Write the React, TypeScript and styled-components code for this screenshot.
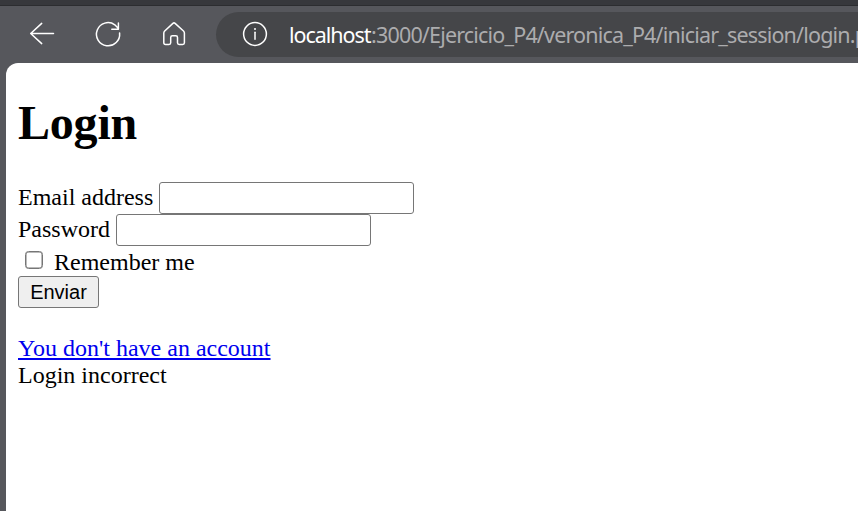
import React from "react";
import styled, { createGlobalStyle } from "styled-components";

const GlobalStyle = createGlobalStyle`
  * { box-sizing: border-box; }
  html, body { margin: 0; padding: 0; }
  body { overflow: hidden; background: #56575c; }
`;

const Browser = styled.div`
  display: flex;
  flex-direction: column;
  width: 858px;
  height: 511px;
  overflow: hidden;
  background: #56575c;
`;

const TabStrip = styled.div`
  flex: none;
  height: 6px;
  background: #37383c;
  border-bottom: 1px solid #2c2d30;
`;

const Toolbar = styled.div`
  flex: none;
  display: flex;
  align-items: center;
  height: 57px;
  padding: 0 0 1px 28px;
`;

const NavButton = styled.button`
  flex: none;
  display: flex;
  align-items: center;
  justify-content: center;
  width: 28px;
  height: 28px;
  margin-right: 38px;
  padding: 0;
  border: 0;
  background: none;
  color: #fff;

  &:last-of-type { margin-right: 28px; }
`;

const Icon = styled.svg`
  display: block;
  width: 28px;
  height: 28px;
  fill: none;
  stroke: currentColor;
  stroke-width: 1.5;
  stroke-linecap: round;
  stroke-linejoin: round;
`;

const AddressBar = styled.div`
  flex: 1;
  display: flex;
  align-items: center;
  gap: 20px;
  height: 45px;
  padding-left: 25px;
  border-radius: 23px 0 0 23px;
  background: #454649;
  color: #fff;
  overflow: hidden;
`;

const InfoIcon = styled(Icon)`
  flex: none;
`;

const Address = styled.div`
  flex: none;
  display: flex;
  padding-top: 1px;
  font: 21.5px/28px "Noto Sans", "Open Sans", sans-serif;
  white-space: nowrap;
`;

const Host = styled.span`
  width: 82px;
  letter-spacing: -1.05px;
  color: #fff;
`;

const Path = styled.span`
  letter-spacing: -0.82px;
  color: #acacae;
`;

const Page = styled.main`
  flex: 1;
  margin-left: 6px;
  padding: 32px 12px 0;
  border-top-left-radius: 12px;
  background: #fff;
  color: #000;
  font: 24px/27px "Liberation Serif", "Times New Roman", serif;
`;

const Title = styled.h1`
  height: 55px;
  margin: 0 0 32px;
  font-size: 48px;
  line-height: 55px;
  letter-spacing: -0.2px;
`;

const Field = styled.div`
  display: flex;
  align-items: center;
  gap: 6px;
  height: 32px;
`;

const Label = styled.label`
  padding-bottom: 1px;
`;

const TextInput = styled.input`
  width: 255px;
  height: 32px;
  margin: 0;
  padding: 2px 3px;
  border: 1px solid #767676;
  border-radius: 3px;
  outline: 0;
  background: #fff;
  font: 20px "Liberation Sans", Arial, sans-serif;
`;

const CheckRow = styled.div`
  display: flex;
  height: 30px;
  padding: 3px 0 0 6px;
`;

const Checkbox = styled.input`
  appearance: none;
  width: 18px;
  height: 18px;
  margin: 2px 11px 0 1px;
  border: 1px solid #767676;
  border-radius: 3.5px;
  background: #fff;
  box-shadow: inset 0 0 0 0.5px #767676;
`;

const SubmitButton = styled.button`
  display: block;
  width: 81px;
  height: 32px;
  margin: 0 0 27px;
  padding: 0;
  border: 1px solid #767676;
  border-radius: 3px;
  background: #efefef;
  color: #000;
  font: 20px/28px "Liberation Sans", Arial, sans-serif;
`;

const Link = styled.a`
  color: #0000ee;
  text-decoration: underline;
`;

const Message = styled.div``;

export default function App() {
  return (
    <>
      <GlobalStyle />
      <Browser>
        <TabStrip />
        <Toolbar>
          <NavButton aria-label="Back">
            <Icon viewBox="0 0 28 28"><path d="M2.7 13.5H25.5M13.7 3.4L2.7 13.5L13.7 23.6" /></Icon>
          </NavButton>
          <NavButton aria-label="Reload">
            <Icon viewBox="0 0 28 28"><path d="M25.6 13A11.6 11.6 0 1 1 20.8 4.8L24.2 8.2M24.4 3V9.2H17.8" /></Icon>
          </NavButton>
          <NavButton aria-label="Home">
            <Icon viewBox="0 0 28 28"><path d="M12.9 3.4Q14 2.4 15.1 3.4L23.5 11Q24.4 11.9 24.4 13V22.7Q24.4 24.4 22.7 24.4H19.2Q17.5 24.4 17.5 22.7V17.4Q17.5 15.7 15.8 15.7H12.4Q10.7 15.7 10.7 17.4V22.7Q10.7 24.4 9 24.4H5.5Q3.8 24.4 3.8 22.7V13Q3.8 11.9 4.7 11Z" /></Icon>
          </NavButton>
          <AddressBar>
            <InfoIcon viewBox="0 0 28 28">
              <circle cx="14" cy="14" r="11.4" />
              <path d="M14 12.2V19.3" />
              <circle cx="14" cy="8.9" r="1" fill="currentColor" stroke="none" />
            </InfoIcon>
            <Address>
              <Host>localhost</Host>
              <Path>:3000/Ejercicio_P4/veronica_P4/iniciar_session/login.p</Path>
            </Address>
          </AddressBar>
        </Toolbar>
        <Page>
          <Title>Login</Title>
          <Field>
            <Label htmlFor="email">Email address</Label>
            <TextInput id="email" type="email" />
          </Field>
          <Field>
            <Label htmlFor="password">Password</Label>
            <TextInput id="password" type="password" />
          </Field>
          <CheckRow>
            <Checkbox id="remember" type="checkbox" />
            <Label htmlFor="remember">Remember me</Label>
          </CheckRow>
          <SubmitButton type="button">Enviar</SubmitButton>
          <Link href="#">You don't have an account</Link>
          <Message>Login incorrect</Message>
        </Page>
      </Browser>
    </>
  );
}
